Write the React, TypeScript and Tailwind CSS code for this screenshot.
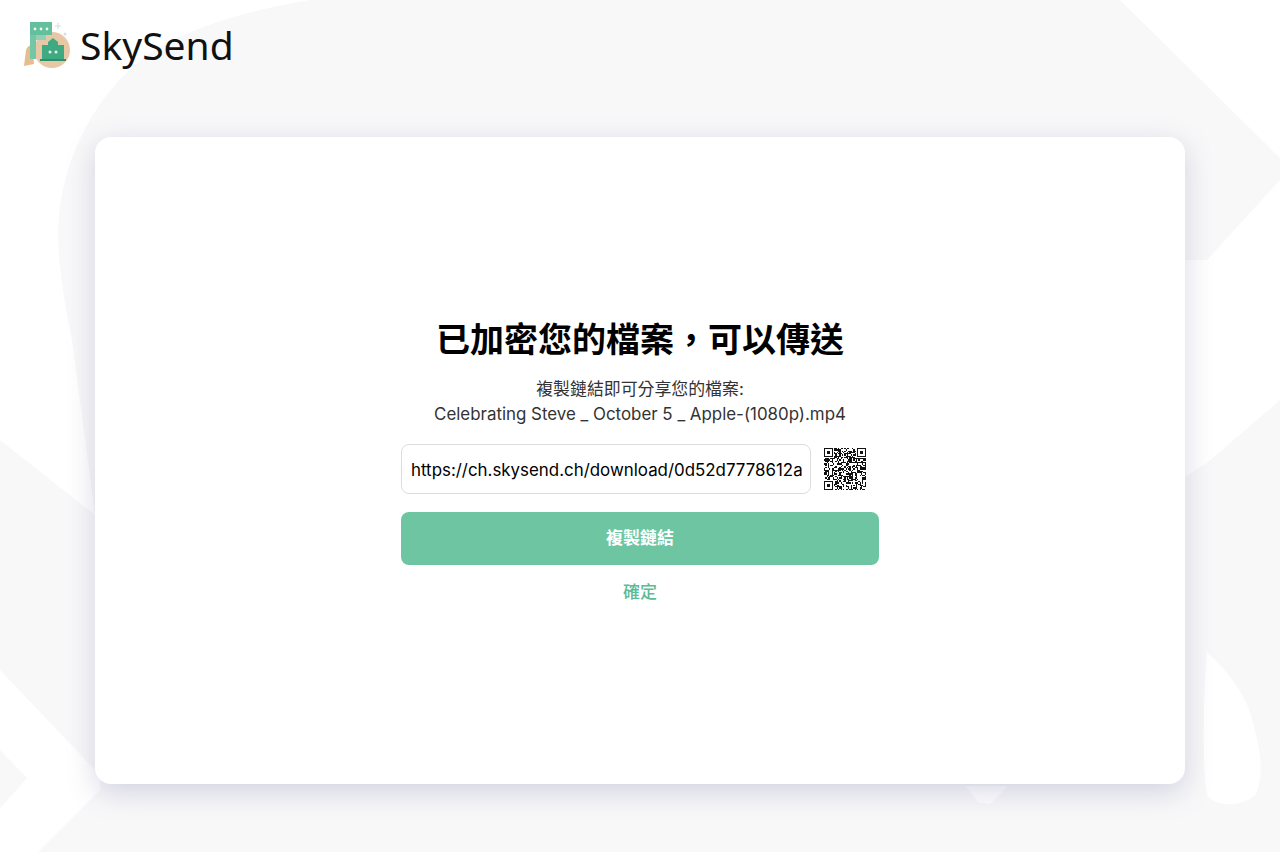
import React from 'react';

const FONT = "font-['Inter','Noto_Sans_CJK_TC',sans-serif]";

// decorative white shapes over the grey page background
function Backdrop() {
    return (
        <svg className="absolute inset-0" width="1280" height="852" viewBox="0 0 1280 852" aria-hidden="true">
            <rect width="1280" height="852" fill="#f8f8f9" />
            <g fill="#ffffff">
                <path d="M0 0 L310 0 C235 12 165 36 133 67 C95 100 65 155 59 215 C56 250 62 290 72 340 L95 515 L0 440 Z" />
                <path d="M0 670 L100 775 L100 790 L38 852 L0 852 L0 808 L27 778 L0 750 Z" />
                <path d="M1120 0 L1280 0 L1280 158 Z" />
                <path d="M1280 180 L1207 260 L1180 260 L1180 480 L1207 463 L1280 400 Z" />
                <path d="M1207 652 C1225 668 1242 690 1250 712 C1258 740 1266 770 1256 794 C1245 806 1220 808 1208 797 C1202 780 1203 700 1207 652 Z" />
                <path d="M965 786 L1008 786 L990 804 L978 802 Z" />
            </g>
        </svg>
    );
}

function Logo() {
    return (
        <svg width="50" height="50" viewBox="0 0 50 50" aria-hidden="true">
            <circle cx="30" cy="30" r="18" fill="#e6c8a6" />
            <path d="M2 46 L4 30 Q6 25 10 25 L12 44 Z" fill="#e6bd8e" />
            <rect x="8" y="2" width="22" height="13" fill="#63bf9c" />
            <rect x="8" y="15" width="6" height="24" fill="#74c7a6" />
            <rect x="14" y="15" width="10" height="5" fill="#8fd0b6" />
            <circle cx="13" cy="9" r="1.4" fill="#e9f6f0" />
            <circle cx="19" cy="9" r="1.4" fill="#e9f6f0" />
            <circle cx="25" cy="9" r="1.4" fill="#e9f6f0" />
            <path d="M20 25 L26 25 L26 22 L31 18 L36 22 L36 25 L42 25 L42 39 L20 39 Z" fill="#3fa982" />
            <rect x="18" y="39" width="26" height="2" fill="#2f8f6c" />
            <circle cx="28" cy="32" r="1.5" fill="#e9f6f0" />
            <circle cx="34" cy="32" r="1.5" fill="#e9f6f0" />
            <path d="M36 3 L36 9 M33 6 L39 6" stroke="#dfe7e4" strokeWidth="1.5" />
            <circle cx="43" cy="14" r="1.5" fill="#d9dee2" />
        </svg>
    );
}

// fake QR code: finder squares plus seeded noise
function QrCode() {
    const n = 33;
    const cells: React.ReactNode[] = [];
    let seed = 20231005;
    const inFinder = (x: number, y: number) =>
        (x < 8 && y < 8) || (x >= n - 8 && y < 8) || (x < 8 && y >= n - 8);
    for (let y = 0; y < n; y++) {
        for (let x = 0; x < n; x++) {
            seed = (seed * 1103515245 + 12345) & 0x7fffffff;
            if (!inFinder(x, y) && (seed >> 16) % 100 < 52) {
                cells.push(<rect key={`${x}-${y}`} x={x} y={y} width="1" height="1" />);
            }
        }
    }
    const finder = (x: number, y: number) => (
        <g key={`f${x}-${y}`}>
            <rect x={x} y={y} width="7" height="7" />
            <rect x={x + 1} y={y + 1} width="5" height="5" fill="#fff" />
            <rect x={x + 2} y={y + 2} width="3" height="3" />
        </g>
    );
    return (
        <svg width="42" height="42" viewBox="0 0 33 33" fill="#111" shapeRendering="crispEdges" aria-label="QR code">
            {cells}
            {finder(0, 0)}
            {finder(n - 7, 0)}
            {finder(0, n - 7)}
        </svg>
    );
}

export default function App() {
    return (
        <div className={`relative h-[852px] w-[1280px] overflow-hidden bg-white ${FONT}`}>
            <Backdrop />
            <div className="relative flex h-full flex-col">
                {/* Header */}
                <header className="flex h-[137px] items-start gap-[8px] pl-[22px] pt-[20px]">
                    <Logo />
                    <span className="font-['Noto_Sans',sans-serif] text-[39px] leading-[50px] text-[#111]">SkySend</span>
                </header>

                {/* Card */}
                <main className="mx-[95px] flex h-[647px] flex-col items-center justify-center rounded-2xl bg-white shadow-[0_8px_28px_rgba(110,110,160,0.28)]">
                    <h1 className="text-[34px] font-bold leading-[46px] text-black">已加密您的檔案{'\uFF0C'}可以傳送</h1>
                    <p className="mt-[14px] text-center text-[16.9px] leading-[25px] text-[#333]">
                        複製鏈結即可分享您的檔案:
                        <br />
                        Celebrating Steve _ October 5 _ Apple-(1080p).mp4
                    </p>
                    <div className="mt-[17px] flex w-[478px] flex-col">
                        <div className="flex items-center">
                            <input
                                readOnly
                                value="https://ch.skysend.ch/download/0d52d7778612a"
                                className="h-[50px] w-[410px] rounded-lg border border-[#dddddd] bg-white pl-[9px] pr-[4px] pt-[1px] text-[16.9px] text-black outline-none"
                            />
                            <div className="ml-[13px]">
                                <QrCode />
                            </div>
                        </div>
                        <button className="mt-[18px] h-[53px] w-full rounded-lg bg-[#6ec5a1] text-[17px] font-semibold text-white">
                            複製鏈結
                        </button>
                        <button className="mt-[15px] text-center text-[17px] font-medium leading-[24px] text-[#5dba96]">
                            確定
                        </button>
                    </div>
                </main>
            </div>
        </div>
    );
}
